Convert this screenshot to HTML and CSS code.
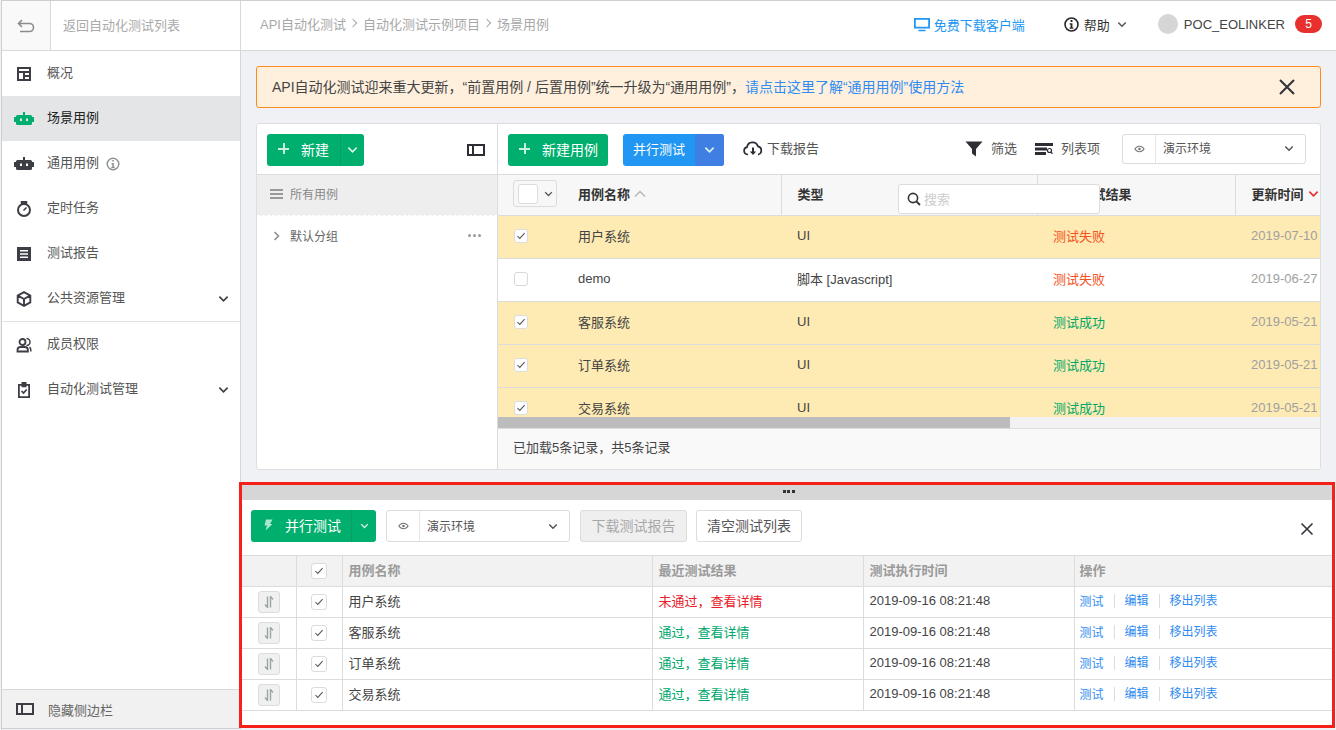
FILE: index.html
```html
<!DOCTYPE html>
<html lang="zh-CN">
<head>
<meta charset="utf-8">
<title>场景用例</title>
<link rel="stylesheet" href="styles.css">
</head>
<body>
<svg class="defs" width="0" height="0" aria-hidden="true">
  <defs>
    <symbol id="robot" viewBox="0 0 20 14">
      <path d="M9 0h2v3H9zM0 5h2v5H0zM18 5h2v5h-2z"/>
      <path fill-rule="evenodd" d="M3.500 3h13A1.500 1.500 0 0 1 18 4.500v7a1.500 1.500 0 0 1-1.500 1.500h-13A1.500 1.500 0 0 1 2 11.500v-7A1.500 1.500 0 0 1 3.500 3zM6 6.500v2.500h2V6.500zM12 6.500v2.500h2V6.500z"/>
    </symbol>
    <symbol id="chev" viewBox="0 0 12 8"><path d="M1.500 1.500 6 6l4.500-4.500" fill="none" stroke="currentColor" stroke-width="1.800"/></symbol>
    <symbol id="eye" viewBox="0 0 14 10"><path fill-rule="evenodd" d="M7 .8C4 .8 1.500 2.800.4 5c1.100 2.200 3.600 4.200 6.600 4.200S12.500 7.200 13.600 5C12.500 2.800 10 .8 7 .8zm0 1.400c2 0 3.800 1.200 4.900 2.800C10.800 6.600 9 7.800 7 7.800S3.200 6.600 2.100 5C3.200 3.400 5 2.200 7 2.200zM7 3.300a1.700 1.700 0 1 0 0 3.400 1.700 1.700 0 0 0 0-3.400z"/></symbol>
    <symbol id="tick" viewBox="0 0 12 10"><path d="M1.500 5 4.500 8l6-6.500" fill="none" stroke="currentColor" stroke-width="1.300"/></symbol>
    <symbol id="sort" viewBox="0 0 10 12"><path d="M3.500 .5v11L1 8.500M6.500 11.500V.5L9 3.500" fill="none" stroke="currentColor" stroke-width="1.400"/></symbol>
    <symbol id="panel" viewBox="0 0 18 12"><path fill-rule="evenodd" d="M0 0h18v12H0zm2 2v8h3V2zm5 0v8h9V2z"/></symbol>
  </defs>
</svg>

<div class="app">
  <aside class="sidebar">
    <div class="back">
      <div class="back-btn">
        <svg class="back-icon" viewBox="0 0 18 14"><path d="M5 1 1.500 4.500 5 8M2 4.500h10.500a4 4 0 0 1 0 8H3" fill="none" stroke="#8c8c8c" stroke-width="1.600"/></svg>
      </div>
      <span class="back-text">返回自动化测试列表</span>
    </div>
    <nav class="nav">
      <a class="nav-item">
        <svg class="nav-icon" viewBox="0 0 16 16"><path fill-rule="evenodd" d="M1 1h14v14H1zm2 2v2h10V3zm0 4v6h4V7zm6 0v2h4V7zm0 4v2h4v-2z" fill="#3d3d45"/></svg>
        <span class="nav-label">概况</span>
      </a>
      <a class="nav-item nav-active">
        <svg class="nav-icon nav-robot"><use href="#robot" fill="#00ae6e"/></svg>
        <span class="nav-label">场景用例</span>
      </a>
      <a class="nav-item">
        <svg class="nav-icon nav-robot"><use href="#robot" fill="#3d3d45"/></svg>
        <span class="nav-label">通用用例</span>
        <svg class="info-small" viewBox="0 0 14 14"><circle cx="7" cy="7" r="5.800" fill="none" stroke="#8f8f8f" stroke-width="1.400"/><path d="M6.200 3h1.600v1.500H6.200zM5.500 6h2.300v3.700h.9V11H5.300V9.700h1V7.300h-.8z" fill="#8f8f8f"/></svg>
      </a>
      <a class="nav-item">
        <svg class="nav-icon" viewBox="0 0 16 16"><circle cx="8" cy="9" r="6" fill="none" stroke="#3d3d45" stroke-width="2"/><path d="M5.500 .8h5v1.600h-5zM7.500 9.500l3-3" stroke="#3d3d45" stroke-width="1.500" fill="#3d3d45"/></svg>
        <span class="nav-label">定时任务</span>
      </a>
      <a class="nav-item">
        <svg class="nav-icon" viewBox="0 0 16 16"><path fill-rule="evenodd" d="M1 1h14v14H1zm3 3v1.500h8V4zm0 3.200v1.500h8V7.200zm0 3.300V12h8v-1.500z" fill="#3d3d45"/></svg>
        <span class="nav-label">测试报告</span>
      </a>
      <a class="nav-item">
        <svg class="nav-icon" viewBox="0 0 16 16"><path d="M8 1.200 14.300 4.600v6.800L8 14.800 1.700 11.400V4.600zM1.900 4.700 8 8l6.100-3.300M8 8v6.600" fill="none" stroke="#3d3d45" stroke-width="1.900"/></svg>
        <span class="nav-label">公共资源管理</span>
        <svg class="nav-chev"><use href="#chev"/></svg>
      </a>
      <div class="nav-sep"></div>
      <a class="nav-item">
        <svg class="nav-icon" viewBox="0 0 16 16"><circle cx="6.500" cy="5" r="3" fill="none" stroke="#3d3d45" stroke-width="1.800"/><path d="M1.500 14.500V13c0-1.800 1.500-3 3.200-3h4c1.700 0 3.200 1.200 3.200 3v1.500z" fill="none" stroke="#3d3d45" stroke-width="1.800"/><path d="M10.500 1.500a3.500 3.500 0 0 1 0 7M14.800 14.500V13c0-1.200-.5-2.200-1.300-2.800" fill="none" stroke="#3d3d45" stroke-width="1.500"/></svg>
        <span class="nav-label">成员权限</span>
      </a>
      <a class="nav-item">
        <svg class="nav-icon" viewBox="0 0 16 16"><path fill-rule="evenodd" d="M5.500 0h5v2H14v14H2V2h3.500zm0 3.700H3.800v10.600h8.400V3.700h-1.700v1.500h-5z" fill="#3d3d45"/><path d="M5.500 9 7.500 11l3.200-3.500" fill="none" stroke="#3d3d45" stroke-width="1.700"/></svg>
        <span class="nav-label">自动化测试管理</span>
        <svg class="nav-chev"><use href="#chev"/></svg>
      </a>
    </nav>
    <div class="side-foot">
      <svg class="foot-icon"><use href="#panel" fill="#3d3d45"/></svg>
      <span>隐藏侧边栏</span>
    </div>
  </aside>

  <div class="main">
    <header class="topbar">
      <div class="crumbs">
        <span>API自动化测试</span><i class="crumb-arrow"></i><span>自动化测试示例项目</span><i class="crumb-arrow"></i><span>场景用例</span>
      </div>
      <div class="top-right">
        <a class="download-client">
          <svg class="monitor" viewBox="0 0 16 15"><path fill-rule="evenodd" d="M0 1h16v10.500H0zm1.800 1.700v7h12.400v-7zM4.500 12.800h7v1.500h-7z" fill="#2196f3"/></svg>
          <span>免费下载客户端</span>
        </a>
        <div class="help">
          <svg class="help-icon" viewBox="0 0 16 16"><circle cx="8" cy="8" r="6.900" fill="none" stroke="#26262c" stroke-width="1.700"/><path d="M7 3.300h2v1.900H7zM6 6.700h3v4.400h1v1.400H6v-1.400h1V8.100H6z" fill="#26262c"/></svg>
          <span>帮助</span>
          <svg class="help-chev"><use href="#chev"/></svg>
        </div>
        <div class="user">
          <span class="avatar"></span>
          <span class="user-name">POC_EOLINKER</span>
          <span class="badge">5</span>
        </div>
      </div>
    </header>

    <div class="content">
      <div class="alert">
        <p class="alert-text">API自动化测试迎来重大更新，“前置用例 / 后置用例”统一升级为“通用用例”，<a class="alert-link">请点击这里了解“通用用例”使用方法</a></p>
        <svg class="alert-close" viewBox="0 0 18 18"><path d="M2 2l14 14M16 2 2 16" stroke="#33343a" stroke-width="2.100" fill="none"/></svg>
      </div>

      <section class="card">
        <div class="tree">
          <div class="tree-bar">
            <div class="split-btn btn-green">
              <span class="split-main new-main"><i class="plus"></i>新建</span>
              <span class="split-caret"><svg class="caret"><use href="#chev"/></svg></span>
            </div>
            <svg class="collapse"><use href="#panel" fill="#2d2d35"/></svg>
          </div>
          <div class="tree-all">
            <span class="burger"></span>
            <span>所有用例</span>
          </div>
          <div class="tree-row">
            <svg class="tree-arrow" viewBox="0 0 7 10"><path d="M1.500 1 5.500 5l-4 4" fill="none" stroke="#8a8a8a" stroke-width="1.500"/></svg>
            <span>默认分组</span>
            <span class="dots"><i></i><i></i><i></i></span>
          </div>
        </div>

        <div class="cases">
          <div class="case-bar">
            <a class="btn-new"><i class="plus"></i>新建用例</a>
            <div class="split-btn btn-blue">
              <span class="split-main blue-main">并行测试</span>
              <span class="split-caret blue-caret"><svg class="caret"><use href="#chev"/></svg></span>
            </div>
            <a class="tool report">
              <svg class="cloud" viewBox="0 0 20 15"><path d="M5 13.500H4.500a3.700 3.700 0 0 1-.5-7.300 5.600 5.600 0 0 1 10.900-.9 4.200 4.200 0 0 1 .3 8.200H15" fill="none" stroke="#2d2d35" stroke-width="1.700"/><path d="M9 6.500h2v4h2.200L10 14l-3.200-3.500H9z" fill="#2d2d35"/></svg>
              <span>下载报告</span>
            </a>
            <div class="case-right">
              <a class="tool">
                <svg class="filter" viewBox="0 0 18 16"><path d="M.5.500h17L11 8v7.500l-4-3V8z" fill="#2d2d35"/></svg>
                <span>筛选</span>
              </a>
              <a class="tool">
                <svg class="columns" viewBox="0 0 18 12"><path d="M0 0h18v3H0zM0 4.500h12v3H0zM0 9h11v3H0z" fill="#2d2d35"/><circle cx="14.500" cy="7.500" r="2" fill="none" stroke="#2d2d35" stroke-width="1.200"/><path d="M16 9l1.500 1.800" stroke="#2d2d35" stroke-width="1.200"/></svg>
                <span>列表项</span>
              </a>
              <div class="env env-top">
                <span class="env-eye"><svg class="eye"><use href="#eye"/></svg></span>
                <span class="env-name">演示环境</span>
                <svg class="env-chev"><use href="#chev"/></svg>
              </div>
            </div>
          </div>

          <div class="case-scroll">
            <table class="case-table">
              <colgroup><col class="c-check"><col class="c-name"><col class="c-type"><col class="c-result"><col class="c-time"></colgroup>
              <thead>
                <tr>
                  <th class="head-check"><span class="check-group"><span class="check-box"></span><svg class="check-caret"><use href="#chev"/></svg></span></th>
                  <th class="name-head">用例名称<svg class="sort-up" viewBox="0 0 12 8"><path d="M1 6.500 6 1.500l5 5" fill="none" stroke="#b5b5b5" stroke-width="1.400"/></svg></th>
                  <th>类型</th>
                  <th>最近测试结果</th>
                  <th class="time-head">更新时间<svg class="sort-down"><use href="#chev"/></svg></th>
                </tr>
              </thead>
              <tbody>
                <tr class="row-on"><td class="cell-check"><span class="box"><svg class="tick"><use href="#tick"/></svg></span></td><td class="name-cell">用户系统</td><td>UI</td><td class="fail">测试失败</td><td class="date">2019-07-10</td></tr>
                <tr><td class="cell-check"><span class="box box-off"></span></td><td class="name-cell">demo</td><td>脚本 [Javascript]</td><td class="fail">测试失败</td><td class="date">2019-06-27</td></tr>
                <tr class="row-on"><td class="cell-check"><span class="box"><svg class="tick"><use href="#tick"/></svg></span></td><td class="name-cell">客服系统</td><td>UI</td><td class="ok">测试成功</td><td class="date">2019-05-21</td></tr>
                <tr class="row-on"><td class="cell-check"><span class="box"><svg class="tick"><use href="#tick"/></svg></span></td><td class="name-cell">订单系统</td><td>UI</td><td class="ok">测试成功</td><td class="date">2019-05-21</td></tr>
                <tr class="row-on"><td class="cell-check"><span class="box"><svg class="tick"><use href="#tick"/></svg></span></td><td class="name-cell">交易系统</td><td>UI</td><td class="ok">测试成功</td><td class="date">2019-05-21</td></tr>
              </tbody>
            </table>
          </div>
          <div class="hscroll"><div class="hthumb"></div></div>
          <div class="case-foot">已加载5条记录，共5条记录</div>
        </div>

        <div class="search">
          <svg class="search-icon" viewBox="0 0 14 14"><circle cx="6" cy="6" r="4.600" fill="none" stroke="#33343a" stroke-width="1.600"/><path d="M9.500 9.500 13 13" stroke="#33343a" stroke-width="1.800"/></svg>
          <span class="search-text">搜索</span>
        </div>
      </section>
    </div>

    <section class="panel">
      <div class="handle"><span class="handle-dots"></span></div>
      <div class="panel-bar">
        <div class="split-btn btn-green panel-run">
          <span class="split-main run-main">
            <svg class="bolt" viewBox="0 0 10 12"><path d="M3 .5h6.500L7 5h2.500L2.500 11.500 4 6.500H1.500z" fill="#a8e8cf"/></svg>并行测试
          </span>
          <span class="split-caret run-caret"><svg class="caret caret-small"><use href="#chev"/></svg></span>
        </div>
        <div class="env env-panel">
          <span class="env-eye"><svg class="eye"><use href="#eye"/></svg></span>
          <span class="env-name">演示环境</span>
          <svg class="env-chev"><use href="#chev"/></svg>
        </div>
        <button class="btn-plain btn-disabled">下载测试报告</button>
        <button class="btn-plain btn-clear">清空测试列表</button>
        <svg class="panel-close" viewBox="0 0 14 14"><path d="M1.500 1.500l11 11M12.500 1.500l-11 11" stroke="#33343a" stroke-width="1.600" fill="none"/></svg>
      </div>
      <table class="run-table">
        <colgroup><col class="r-sort"><col class="r-check"><col class="r-name"><col class="r-result"><col class="r-time"><col class="r-op"></colgroup>
        <thead>
          <tr>
            <th></th>
            <th class="center"><span class="box run-box"><svg class="tick"><use href="#tick"/></svg></span></th>
            <th>用例名称</th>
            <th>最近测试结果</th>
            <th>测试执行时间</th>
            <th>操作</th>
          </tr>
        </thead>
        <tbody>
          <tr>
            <td class="center"><span class="sort-btn"><svg class="sort-icon"><use href="#sort"/></svg></span></td>
            <td class="center"><span class="box run-box"><svg class="tick"><use href="#tick"/></svg></span></td>
            <td>用户系统</td><td class="fail-strong">未通过，查看详情</td><td>2019-09-16 08:21:48</td>
            <td><div class="ops"><a>测试</a><a>编辑</a><a>移出列表</a></div></td>
          </tr>
          <tr>
            <td class="center"><span class="sort-btn"><svg class="sort-icon"><use href="#sort"/></svg></span></td>
            <td class="center"><span class="box run-box"><svg class="tick"><use href="#tick"/></svg></span></td>
            <td>客服系统</td><td class="ok">通过，查看详情</td><td>2019-09-16 08:21:48</td>
            <td><div class="ops"><a>测试</a><a>编辑</a><a>移出列表</a></div></td>
          </tr>
          <tr>
            <td class="center"><span class="sort-btn"><svg class="sort-icon"><use href="#sort"/></svg></span></td>
            <td class="center"><span class="box run-box"><svg class="tick"><use href="#tick"/></svg></span></td>
            <td>订单系统</td><td class="ok">通过，查看详情</td><td>2019-09-16 08:21:48</td>
            <td><div class="ops"><a>测试</a><a>编辑</a><a>移出列表</a></div></td>
          </tr>
          <tr>
            <td class="center"><span class="sort-btn"><svg class="sort-icon"><use href="#sort"/></svg></span></td>
            <td class="center"><span class="box run-box"><svg class="tick"><use href="#tick"/></svg></span></td>
            <td>交易系统</td><td class="ok">通过，查看详情</td><td>2019-09-16 08:21:48</td>
            <td><div class="ops"><a>测试</a><a>编辑</a><a>移出列表</a></div></td>
          </tr>
        </tbody>
      </table>
    </section>
  </div>
</div>
</body>
</html>
```
FILE: styles.css
```css
* { box-sizing: border-box; }
html, body { margin: 0; height: 730px; overflow: hidden; }
body {
  font-family: "Liberation Sans", "Noto Sans CJK SC", sans-serif;
  font-size: 13px;
  color: #333;
  background: #f0f1f5;
}
.defs { position: absolute; }
a { color: inherit; text-decoration: none; }
svg { display: block; flex: none; }

.app {
  display: flex;
  height: 730px;
  border-top: 1px solid #cfcfcf;
  border-left: 1px solid #cfcfcf;
  margin-left: 1px;
}

/* sidebar */
.sidebar {
  width: 238px;
  flex: none;
  display: flex;
  flex-direction: column;
  background: #fff;
  border-right: 1px solid #d8d8d8;
  border-bottom: 1px solid #cfcfcf;
  box-sizing: content-box;
  height: 727px;
}
.back { display: flex; align-items: center; height: 50px; border-bottom: 1px solid #d8d8d8; flex: none; }
.back-btn { width: 49px; height: 49px; display: flex; align-items: center; justify-content: center; background: #f9f9f9; border-right: 1px solid #d8d8d8; }
.back-icon { width: 18px; height: 14px; }
.back-text { margin-left: 12px; padding-bottom: 3px; color: #aaa; }

.nav { flex: 1; }
.nav-item { display: flex; align-items: center; height: 45px; padding-left: 14px; color: #555; }
.nav-label { padding-bottom: 4px; }
.nav-active { background: #e4e5e6; color: #222; }
.nav-icon { width: 16px; height: 16px; margin-right: 15px; }
.nav-robot { width: 20px; height: 14px; margin-left: -2px; margin-right: 13px; }
.info-small { width: 14px; height: 14px; margin-left: 7px; }
.nav-chev { width: 11px; height: 8px; margin-left: auto; margin-right: 11px; color: #3d3d45; }
.nav-sep { height: 1px; background: #e2e2e2; }
.side-foot { display: flex; align-items: center; height: 39px; padding-left: 14px; background: #f1f1f1; border-top: 1px solid #d8d8d8; color: #666; flex: none; }
.foot-icon { width: 18px; height: 12px; margin-right: 14px; }

/* main */
.main { flex: 1; min-width: 0; display: flex; flex-direction: column; }
.topbar { display: flex; align-items: center; justify-content: space-between; height: 50px; flex: none; background: #fff; border-bottom: 1px solid #d8d8d8; padding: 0 14px 3px 19px; }
.crumbs { display: flex; align-items: center; color: #a8a8a8; margin-bottom: 2px; }
.crumb-arrow { width: 6px; height: 6px; border-top: 1.200px solid #aaa; border-right: 1.200px solid #aaa; transform: rotate(45deg); margin: 0 7px 0 4px; }
.top-right { display: flex; align-items: center; }
.download-client { display: flex; align-items: center; color: #2196f3; margin-right: 39px; }
.monitor { width: 16px; height: 15px; margin-right: 4px; }
.help { display: flex; align-items: center; color: #333; margin-right: 31px; }
.help-icon { width: 15px; height: 15px; margin-right: 5px; }
.help-chev { width: 10px; height: 7px; margin-left: 7px; color: #555; }
.user { display: flex; align-items: center; }
.avatar { width: 20px; height: 20px; border-radius: 50%; background: #d6d6d6; margin-right: 6px; }
.user-name { color: #444; }
.badge { width: 27px; height: 18px; margin-left: 10px; border-radius: 9px; background: #e8302e; color: #fff; font-size: 12px; line-height: 18px; text-align: center; }

.content { flex: none; padding: 15px 15px 0; height: 431px; }
.alert { display: flex; align-items: center; justify-content: space-between; height: 42px; padding: 0 24px 0 15px; background: #fff0de; border: 1px solid #ff8a1f; border-radius: 3px; }
.alert-text { margin: 0 0 3px; color: #444; font-size: 14px; }
.alert-link { color: #2f8cf0; }
.alert-close { width: 18px; height: 18px; }

.card { position: relative; display: flex; height: 347px; margin-top: 15px; background: #fff; border: 1px solid #dedede; border-radius: 3px; }
.tree { width: 241px; flex: none; border-right: 1px solid #dcdcdc; }
.tree-bar { display: flex; align-items: center; justify-content: space-between; height: 51px; padding: 1px 12px 0 10px; border-bottom: 1px solid #dcdcdc; }
.split-btn { display: flex; height: 32px; border-radius: 3px; color: #fff; font-size: 14px; overflow: hidden; white-space: nowrap; }
.btn-green { background: #00ae6e; }
.btn-blue { background: #2196f3; width: 101px; margin-left: 15px; }
.split-main { display: flex; align-items: center; flex: 1; padding-bottom: 2px; }
.blue-main { justify-content: center; font-size: 13px; }
.new-main { padding-left: 11px; width: 73px; flex: none; }
.split-caret { display: flex; align-items: center; justify-content: center; width: 24px; flex: none; border-left: 1px solid #0a9c66; }
.blue-caret { width: 29px; background: #3f7fe3; border-left: 0; }
.caret { width: 11px; height: 8px; color: #d9f5ea; }
.caret-small { width: 9px; height: 6px; }
.plus { display: inline-block; flex: none; width: 11px; height: 11px; margin-right: 12px; background: linear-gradient(#c9f0e0, #c9f0e0) center / 100% 2px no-repeat, linear-gradient(#c9f0e0, #c9f0e0) center / 2px 100% no-repeat; }
.collapse { width: 18px; height: 12px; }
.tree-all { display: flex; align-items: center; height: 41px; padding: 0 0 3px 13px; background: #eee; border-bottom: 1px dashed #fff; color: #888; font-size: 12px; }
.burger { width: 13px; height: 10px; margin-right: 7px; border-top: 2px solid #999; border-bottom: 2px solid #999; background: linear-gradient(#999, #999) center / 100% 2px no-repeat; }
.tree-row { display: flex; align-items: center; height: 39px; padding: 0 16px; color: #666; font-size: 12px; }
.tree-arrow { width: 7px; height: 10px; margin-right: 10px; }
.dots { display: flex; gap: 2px; margin-left: auto; }
.dots i { width: 3px; height: 3px; background: #9a9a9a; border-radius: 50%; }

.cases { flex: 1; min-width: 0; display: flex; flex-direction: column; }
.case-bar { display: flex; align-items: center; height: 51px; padding: 1px 14px 0 10px; border-bottom: 1px solid #dcdcdc; flex: none; }
.btn-new { display: flex; align-items: center; width: 100px; height: 32px; padding: 0 0 2px 11px; background: #00ae6e; border-radius: 3px; color: #fff; font-size: 14px; white-space: nowrap; }
.tool { display: flex; align-items: center; color: #555; margin-bottom: 2px; }
.tool span { padding-bottom: 2px; }
.report { margin-left: 19px; }
.cloud { width: 20px; height: 15px; margin-right: 4px; }
.case-right { display: flex; align-items: center; margin-left: auto; }
.filter { width: 18px; height: 16px; margin-right: 8px; }
.columns { width: 18px; height: 12px; margin-left: 18px; margin-right: 8px; }
.env { display: flex; align-items: center; height: 30px; background: #fff; border: 1px solid #dcdcdc; border-radius: 3px; color: #555; }
.env-eye { display: flex; align-items: center; justify-content: center; width: 33px; height: 100%; border-right: 1px solid #e6e6e6; flex: none; }
.eye { width: 11px; height: 8px; fill: #777; }
.env-name { margin-left: 7px; padding-bottom: 3px; font-size: 12px; }
.env-chev { width: 10px; height: 7px; margin-left: auto; margin-right: 11px; color: #555; }
.env-top { width: 184px; margin-left: 22px; margin-bottom: 2px; }

.case-scroll { height: 242px; overflow: hidden; flex: none; }
.case-table { width: 823px; border-collapse: collapse; table-layout: fixed; }
.c-check { width: 80px; } .c-name { width: 203px; } .c-type { width: 256px; } .c-result { width: 198px; } .c-time { width: 86px; }
.case-table th { height: 40px; padding: 0 0 2px 16px; background: #f7f7f7; border-bottom: 1px solid #dcdcdc; border-right: 1px solid #dcdcdc; text-align: left; font-weight: 700; color: #333; white-space: nowrap; overflow: hidden; }
.case-table th.head-check { border-right: 0; padding-left: 15px; }
.case-table th.name-head { padding-left: 0; }
.case-table th.time-head { border-right: 0; }
.case-table td { height: 43px; padding: 0 0 2px 16px; border-bottom: 1px solid #dcdcdc; color: #444; white-space: nowrap; overflow: hidden; }
.case-table td.name-cell { padding-left: 0; }
.case-table td.fail { color: #f4511e; }
.case-table td.ok { color: #00a86b; }
.case-table td.date { color: #a0a0a0; }
.row-on td { background: #feebb3; }
.check-group { display: flex; align-items: center; width: 44px; height: 27px; padding-left: 4px; border: 1px solid #dcdcdc; border-radius: 3px; }
.check-box { width: 20px; height: 20px; background: #fff; border: 1px solid #dcdcdc; border-radius: 3px; }
.check-caret { width: 9px; height: 6px; margin-left: 6px; color: #555; }
.sort-up { display: inline-block; width: 12px; height: 8px; margin-left: 4px; vertical-align: 1px; }
.sort-down { display: inline-block; width: 11px; height: 8px; margin-left: 4px; color: #e8302e; vertical-align: 1px; }
.case-table td.cell-check { padding-left: 16px; padding-bottom: 1px; }
.box { display: flex; align-items: center; justify-content: center; width: 14px; height: 14px; background: #fff; border: 1px solid #dcdcdc; border-radius: 3px; color: #555; }
.box-off { border-color: #d9d9d9; }
.tick { width: 10px; height: 8px; }
.hscroll { height: 11px; background: #f2f2f2; flex: none; }
.hthumb { width: 512px; height: 100%; background: #bcbcbc; }
.case-foot { flex: 1; display: flex; align-items: center; padding: 0 0 5px 15px; background: #f9f9f9; border-top: 1px solid #dcdcdc; color: #444; }

.search { position: absolute; left: 641px; top: 60px; display: flex; align-items: center; width: 202px; height: 30px; padding-left: 8px; background: #fff; border: 1px solid #dcdcdc; border-radius: 3px; color: #ccc; }
.search-icon { width: 14px; height: 14px; margin-right: 3px; }
.search-text { padding-bottom: 2px; }

/* bottom panel */
.panel { flex: none; height: 246px; margin-left: -2px; margin-right: 1px; background: #fff; border: 3px solid #f5201a; }
.handle { display: flex; align-items: center; justify-content: center; height: 15px; background: #d6d6d6; }
.handle-dots { width: 12px; height: 3px; background: linear-gradient(90deg, #333 0 3px, transparent 3px 4.500px, #333 4.500px 7.500px, transparent 7.500px 9px, #333 9px 12px); margin-bottom: 3px; margin-left: 3px; }
.panel-bar { display: flex; align-items: center; height: 56px; padding: 0 18px 3px 9px; border-bottom: 1px solid #dcdcdc; }
.panel-run { width: 125px; }
.run-main { padding-left: 12px; }
.bolt { width: 10px; height: 12px; margin-right: 12px; }
.run-caret { width: 25px; }
.env-panel { width: 184px; height: 32px; margin-left: 10px; }
.env-panel .env-name { padding-bottom: 1px; }
.btn-plain { height: 32px; margin-left: 10px; padding: 0 0 2px; font: inherit; font-size: 14px; background: #fff; border: 1px solid #dcdcdc; border-radius: 3px; color: #555; }
.btn-disabled { width: 107px; background: #efefef; color: #a8a8a8; }
.btn-clear { width: 106px; margin-left: 9px; }
.panel-close { width: 14px; height: 14px; margin-left: auto; margin-top: 6px; }

.run-table { width: 100%; border-collapse: collapse; table-layout: fixed; }
.r-sort { width: 54px; } .r-check { width: 46px; } .r-name { width: 310px; } .r-result { width: 211px; } .r-time { width: 211px; }
.run-table th { height: 30px; padding: 0 5px 2px 6px; background: #f2f2f2; border-bottom: 1px solid #dcdcdc; border-right: 1px solid #dcdcdc; text-align: left; color: #9a9a9a; font-weight: 700; }
.run-table td { height: 31px; padding: 0 5px 2px 6px; border-bottom: 1px solid #dcdcdc; border-right: 1px solid #dcdcdc; color: #444; }
.run-table td:last-child, .run-table th:last-child { border-right: 0; padding-left: 5px; }
.run-table .center { padding: 0; }
.run-table .center .box, .run-table .center .sort-btn { margin: 0 auto; }
.run-box { width: 16px; height: 16px; }
.sort-btn { display: flex; align-items: center; justify-content: center; width: 22px; height: 22px; background: #f0f0f0; border: 1px solid #dcdcdc; border-radius: 3px; color: #9aa79f; }
.sort-icon { width: 10px; height: 12px; }
.run-table td.fail-strong { color: #e8202a; }
.run-table td.ok { color: #00a86b; }
.ops { display: flex; align-items: center; font-size: 12px; color: #2f8cf0; }
.ops a + a { margin-left: 10px; padding-left: 10px; border-left: 1px solid #dcdcdc; line-height: 14px; }
```
